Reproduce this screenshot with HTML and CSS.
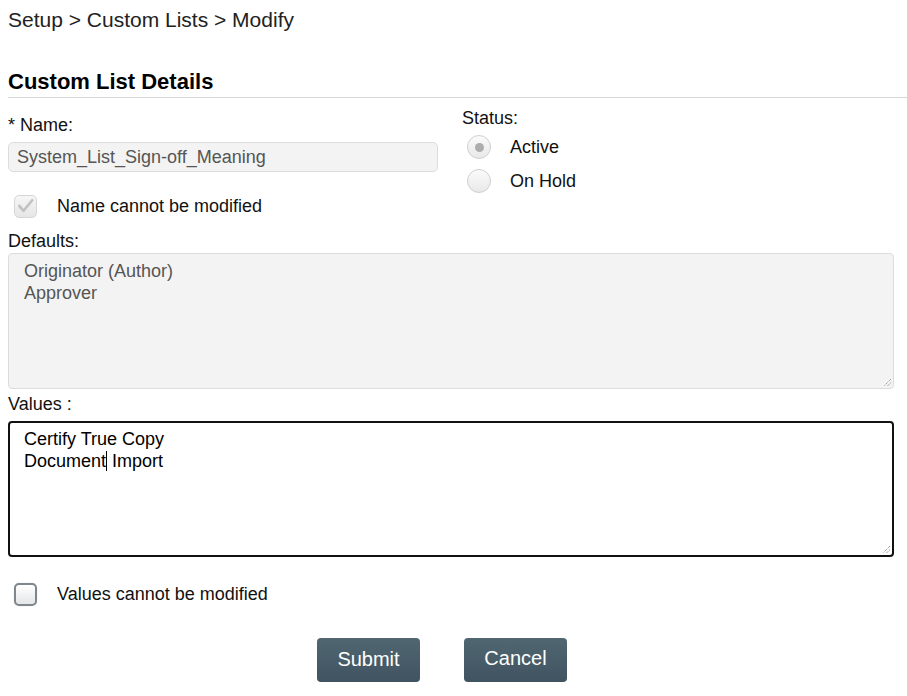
FILE: index.html
```html
<!DOCTYPE html>
<html>
<head>
<meta charset="utf-8">
<link rel="stylesheet" href="styles.css">
</head>
<body>
<div class="page">
  <div class="breadcrumb">Setup &gt; Custom Lists &gt; Modify</div>
  <h2 class="section-title">Custom List Details</h2>

  <div class="top-row">
    <div class="col-left">
      <div class="label label-name">* Name:</div>
      <div class="input-box">System_List_Sign-off_Meaning</div>
      <div class="check-row check-row-name">
        <span class="checkbox checkbox-disabled">
          <svg viewBox="0 0 22 22" width="22" height="22"><path d="M4.5 11 L9 16 L18 5" fill="none" stroke="#c2c2c2" stroke-width="2.8" stroke-linecap="round" stroke-linejoin="round"/></svg>
        </span>
        <span class="check-label">Name cannot be modified</span>
      </div>
    </div>
    <div class="col-right">
      <div class="label label-status">Status:</div>
      <div class="radio-row">
        <span class="radio"><span class="radio-dot"></span></span>
        <span class="radio-label">Active</span>
      </div>
      <div class="radio-row radio-row-second">
        <span class="radio"></span>
        <span class="radio-label">On Hold</span>
      </div>
    </div>
  </div>

  <div class="label label-defaults">Defaults:</div>
  <div class="textbox textbox-disabled">
    <div>Originator (Author)</div>
    <div>Approver</div>
    <svg class="grip" viewBox="0 0 10 10" width="10" height="10"><path d="M9 2 L2 9 M9 5.5 L5.5 9" stroke="#888" stroke-width="1" stroke-dasharray="1 1"/></svg>
  </div>

  <div class="label label-values">Values :</div>
  <div class="textbox textbox-focus">
    <div>Certify True Copy</div>
    <div>Document<span class="caret"></span> Import</div>
    <svg class="grip" viewBox="0 0 10 10" width="10" height="10"><path d="M9 2 L2 9 M9 5.5 L5.5 9" stroke="#777" stroke-width="1" stroke-dasharray="1 1"/></svg>
  </div>

  <div class="check-row check-row-values">
    <span class="checkbox checkbox-empty"></span>
    <span class="check-label">Values cannot be modified</span>
  </div>

  <div class="buttons">
    <button class="btn btn-submit">Submit</button>
    <button class="btn btn-cancel">Cancel</button>
  </div>
</div>
</body>
</html>
```

FILE: styles.css
```css
html, body {
  margin: 0;
  padding: 0;
  background: #ffffff;
}

body {
  font-family: "Liberation Sans", Arial, sans-serif;
  color: #111;
  font-size: 18px;
}

.page {
  padding-left: 8px;
  padding-top: 8px;
}

.breadcrumb {
  font-size: 21px;
  line-height: 24px;
  color: #222;
}

.section-title {
  margin: 37px 0 0 0;
  font-size: 22px;
  line-height: 26px;
  font-weight: bold;
  color: #000;
  padding-bottom: 2px;
  border-bottom: 1px solid #d6d6d6;
}

.label {
  font-size: 18px;
  line-height: 22px;
  color: #111;
}

.top-row {
  display: flex;
}

.col-left {
  width: 430px;
}

.col-right {
  margin-left: 24px;
}

.label-name {
  margin-top: 16px;
}

.label-status {
  margin-top: 9px;
}

.input-box {
  margin-top: 6px;
  box-sizing: border-box;
  height: 30px;
  border: 1px solid #dcdcdc;
  border-radius: 5px;
  background: #f3f3f3;
  color: #555;
  font-size: 18px;
  line-height: 28px;
  padding-left: 8px;
}

.check-row {
  display: flex;
  align-items: center;
  height: 24px;
}

.check-row-name {
  margin-top: 22px;
}

.check-row-values {
  margin-top: 25px;
}

.checkbox {
  box-sizing: border-box;
  width: 23px;
  height: 23px;
  margin-left: 6px;
  border-radius: 5px;
  display: inline-flex;
  align-items: center;
  justify-content: center;
}

.checkbox-disabled {
  border: 1px solid #d6d6d6;
  background: linear-gradient(#f6f6f6, #e6e6e6);
}

.checkbox-disabled svg {
  display: block;
}

.checkbox-empty {
  border: 2px solid #7f878c;
  background: linear-gradient(#ffffff, #e4e6e8);
  box-shadow: 0 0 1px #b0b5b8;
}

.check-label {
  margin-left: 20px;
  font-size: 18px;
  line-height: 22px;
}

.radio-row {
  display: flex;
  align-items: center;
  height: 24px;
  margin-top: 6px;
}

.radio-row-second {
  margin-top: 10px;
}

.radio {
  box-sizing: border-box;
  width: 24px;
  height: 24px;
  margin-left: 5px;
  border-radius: 50%;
  border: 1px solid #cfcfcf;
  background: linear-gradient(#fbfbfb, #e8e8e8);
  display: inline-flex;
  align-items: center;
  justify-content: center;
}

.radio-dot {
  width: 9px;
  height: 9px;
  border-radius: 50%;
  background: #adadad;
}

.radio-label {
  margin-left: 19px;
  font-size: 18px;
  line-height: 22px;
}

.label-defaults {
  margin-top: 12px;
}

.label-values {
  margin-top: 4px;
}

.textbox {
  position: relative;
  box-sizing: border-box;
  width: 886px;
  height: 136px;
  font-size: 18px;
  line-height: 22px;
}

.textbox-disabled {
  margin-top: 1px;
  border: 1px solid #dcdcdc;
  border-radius: 4px;
  background: #f3f3f3;
  color: #555;
  padding: 6px 15px;
}

.textbox-focus {
  margin-top: 6px;
  border: 2px solid #111;
  border-radius: 4px;
  background: #fff;
  color: #000;
  padding: 5px 14px;
}

.caret {
  display: inline-block;
  width: 1px;
  height: 20px;
  background: #000;
  vertical-align: -4px;
}

.grip {
  position: absolute;
  right: 1px;
  bottom: 1px;
}

.buttons {
  display: flex;
  gap: 44px;
  padding-left: 309px;
  margin-top: 32px;
}

.btn {
  box-sizing: border-box;
  width: 103px;
  height: 44px;
  border: none;
  border-radius: 4px;
  background: linear-gradient(#506671, #3f5460);
  color: #fff;
  font-family: "Liberation Sans", Arial, sans-serif;
  font-size: 20px;
  line-height: 24px;
  padding: 0;
}

.btn-submit {
  padding-bottom: 3px;
}

.btn-cancel {
  padding-bottom: 5px;
}
```
